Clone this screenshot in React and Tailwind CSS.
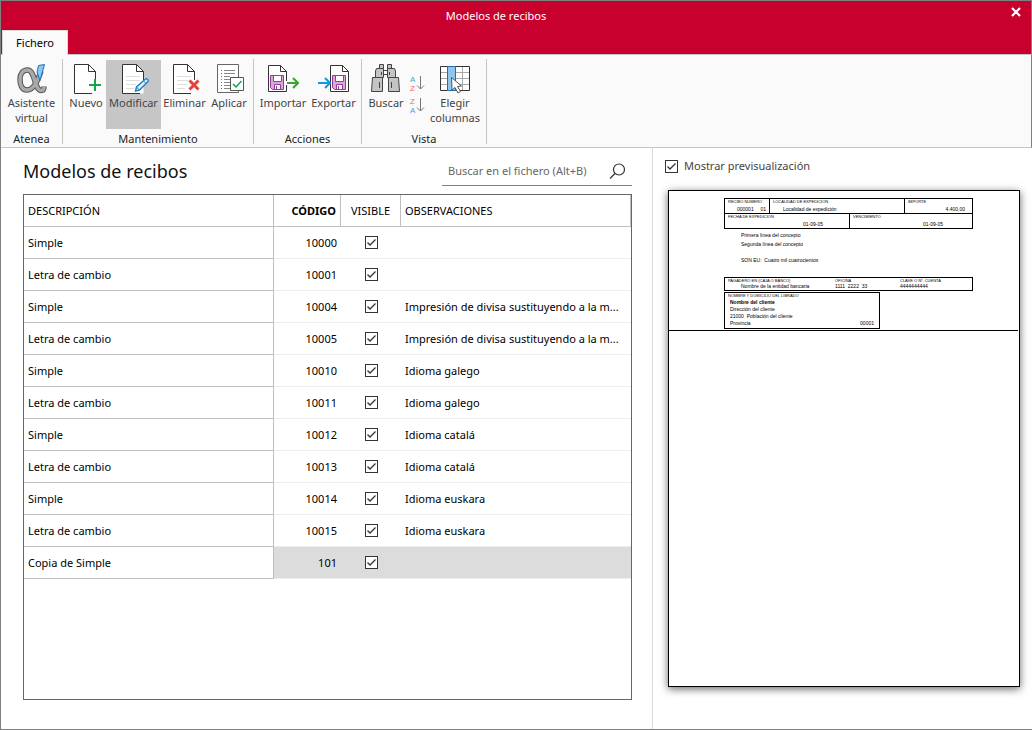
import React, { useState } from "react";

const ROWS = [
  { description: "Simple", code: 10000, notes: "" },
  { description: "Letra de cambio", code: 10001, notes: "" },
  { description: "Simple", code: 10004, notes: "Impresión de divisa sustituyendo a la m..." },
  { description: "Letra de cambio", code: 10005, notes: "Impresión de divisa sustituyendo a la m..." },
  { description: "Simple", code: 10010, notes: "Idioma galego" },
  { description: "Letra de cambio", code: 10011, notes: "Idioma galego" },
  { description: "Simple", code: 10012, notes: "Idioma catalá" },
  { description: "Letra de cambio", code: 10013, notes: "Idioma catalá" },
  { description: "Simple", code: 10014, notes: "Idioma euskara" },
  { description: "Letra de cambio", code: 10015, notes: "Idioma euskara" },
  { description: "Copia de Simple", code: 101, notes: "" },
];

const Icon = ({ children }) => (
  <svg width="32" height="32" viewBox="0 0 32 32" fill="none" aria-hidden="true">
    {children}
  </svg>
);

const AlphaIcon = () => (
  <Icon>
    <path
      d="M25 8C22 17 18 27 11 27C6 27 4 22 4 16.500C4 10.500 7 7 11.500 7C19.500 7 18 27 25 27.500C27 27.500 28 26 28 23.500"
      stroke="#555"
      strokeWidth="5.500"
    />
    <path
      d="M24.500 9C22 17 18 27 11 27C6 27 4 22 4 16.500C4 10.500 7 7 11.500 7C19.500 7 18 27 25 27.500C27 27.500 28 26 28 24"
      stroke="#a9a9a9"
      strokeWidth="3.500"
    />
    <path d="M22.500 2.500L28.500 1.500L24 17.500L21 9Z" fill="#8cc8f4" stroke="#1e6fb8" />
  </Icon>
);

const Page = () => (
  <>
    <path d="M4.500 1.500H18.500L25.500 8.500V30.500H4.500Z" fill="#fff" />
    <path d="M25.500 17V8.500L18.500 1.500H4.500V30.500H22" stroke="#333" />
    <path d="M18.500 1.500V8.500H25.500" stroke="#333" />
  </>
);

const PageLines = () => (
  <path d="M8 13.500H22M8 17.500H22M8 21.500H18M8 25.500H16" stroke="#ddd" />
);

const NewIcon = () => (
  <Icon>
    <Page />
    <path d="M19 22H31M25 16V28" stroke="#fafafa" strokeWidth="5" />
    <path d="M19 22H31M25 16V28" stroke="#16a34a" strokeWidth="2" />
  </Icon>
);

const EditIcon = () => (
  <Icon>
    <Page />
    <PageLines />
    <path
      d="M17.500 28L18.500 24L27.500 16C28.500 15 31 17 30 18.500L21.500 27Z"
      fill="#e3f1fb"
      stroke="#2484c6"
      strokeWidth="1.500"
    />
    <path d="M25.500 18L28 20.500M18.500 24L21.500 27" stroke="#2484c6" />
  </Icon>
);

const DeleteIcon = () => (
  <Icon>
    <Page />
    <PageLines />
    <path d="M20 17L30 27M30 17L20 27" stroke="#fafafa" strokeWidth="5" />
    <path d="M20.500 17.500L29.500 26.500M29.500 17.500L20.500 26.500" stroke="#e8403c" strokeWidth="3" />
  </Icon>
);

const ApplyIcon = () => (
  <Icon>
    <path d="M4.500 1.500H25.500V29.500H4.500Z" fill="#fff" stroke="#666" />
    <path
      d="M11 7.500H22M11 10.500H22M11 13.500H17M11 16.500H17M11 19.500H17M11 22.500H17M11 25.500H20"
      stroke="#888"
    />
    <path d="M8 7.500H9M8 13.500H9M8 16.500H9M8 22.500H9" stroke="#16a34a" />
    <path d="M8 10.500H9M8 19.500H9M8 25.500H9" stroke="#d03030" />
    <path d="M17.500 14.500H30.500V27.500H17.500Z" fill="#fff" stroke="#555" />
    <path d="M20 21L23 24L28.500 18" stroke="#16a34a" strokeWidth="1.500" />
  </Icon>
);

const Floppy = () => (
  <>
    <path d="M3.500 12.500H16.500V26.500H5.500L3.500 24.500Z" fill="#dba6dd" stroke="#943c97" />
    <path d="M6.500 12.500H14.500V18.500H6.500Z" fill="#fff" stroke="#943c97" />
    <path d="M7.500 21.500H13.500V26.500H7.500Z" fill="#fff" stroke="#943c97" />
    <path d="M9.500 23V26" stroke="#943c97" />
  </>
);

const SavePage = () => (
  <>
    <path d="M1.500 2.500H13.500L19.500 8.500V28.500H1.500Z" fill="#fff" stroke="#333" />
    <path d="M13.500 2.500V8.500H19.500" stroke="#333" />
    <Floppy />
  </>
);

const ImportIcon = () => (
  <Icon>
    <SavePage />
    <path d="M19 20H30M25 15L30 20L25 25" stroke="#fafafa" strokeWidth="4" />
    <path d="M20 20H31M26 15L31 20L26 25" stroke="#3aa52c" strokeWidth="2" />
  </Icon>
);

const ExportIcon = () => (
  <Icon>
    <g transform="translate(11 0)">
      <SavePage />
    </g>
    <path d="M0 20H12M7 15L12 20L7 25" stroke="#0d99dc" strokeWidth="2" />
  </Icon>
);

const BinocularsIcon = () => (
  <Icon>
    <g fill="#c6c4c2" stroke="#444">
      <path d="M9.500 1.500H13.500V5.500H9.500ZM17.500 1.500H21.500V5.500H17.500Z" />
      <path d="M13.500 7.500H17.500V11.500H13.500Z" fill="#fff" />
      <path d="M6.500 5.500H13.500V14.500H5.500V8ZM17.500 5.500H24.500L25.500 8V14.500H17.500Z" />
      <path d="M2.500 14.500H12.500V28.500H1.500ZM18.500 14.500H28.500L29.500 28.500H18.500Z" />
      <path d="M11.500 9V12M19.500 9V12M9.500 19V25M21.500 19V25" />
    </g>
  </Icon>
);

const ColumnsIcon = () => (
  <Icon>
    <path d="M1.500 3.500H30.500V27.500H1.500Z" fill="#fff" />
    <path d="M1 9.500H31M1 15.500H31M1 21.500H31M16.500 3V28M23.500 3V28" stroke="#aaa" />
    <path d="M1.500 3.500H30.500V27.500H1.500Z" stroke="#333" />
    <path d="M8.500 3.500H16.500V27.500H8.500Z" fill="#8fc6f0" stroke="#1c6fb5" />
    <path
      d="M12.500 14.500L13 27L16 24.500L19 30L21.500 28.500L18.500 23.500L22.500 23Z"
      fill="#fff"
      stroke="#555"
    />
  </Icon>
);

const SortIcon = ({ top, bottom, topColor, bottomColor }) => (
  <svg width="16" height="19" viewBox="0 0 16 19" fill="none" aria-hidden="true">
    <g fontFamily="Liberation Sans, Arial, sans-serif" fontSize="8">
      <text x="1" y="8" fill={topColor}>{top}</text>
      <text x="1" y="17" fill={bottomColor}>{bottom}</text>
    </g>
    <path d="M11.500 2V15M8 11.500L11.500 15L15 11.500" stroke="#777" />
  </svg>
);

const RibbonGroup = ({ label, className, children }) => (
  <div className={`flex flex-col border-r border-[#c6c6c6] ${className}`}>
    <div className="flex grow items-start pt-px">{children}</div>
    <div className="text-center leading-[10px] text-[#222]">{label}</div>
  </div>
);

const RibbonButton = ({ icon, label, className }) => (
  <button
    type="button"
    className={`flex h-[69px] flex-col items-center pt-[3px] leading-[15px] text-[#444] ${className}`}
  >
    {icon}
    <span className="whitespace-pre-line text-center">{label}</span>
  </button>
);

const Ribbon = () => (
  <div className="flex h-[93px] border-b border-r border-b-[#c6c6c6] border-r-[#808080] bg-[#fafafa] pt-1 pb-[3px]">
    <RibbonGroup label="Atenea" className="w-[62px]">
      <RibbonButton icon={<AlphaIcon />} label={"Asistente\nvirtual"} className="w-full" />
    </RibbonGroup>
    <RibbonGroup label="Mantenimiento" className="px-[3px]">
      <RibbonButton icon={<NewIcon />} label="Nuevo" className="w-10" />
      <RibbonButton icon={<EditIcon />} label="Modificar" className="w-[55px] bg-[#c6c6c6]" />
      <RibbonButton icon={<DeleteIcon />} label="Eliminar" className="w-[47px]" />
      <RibbonButton icon={<ApplyIcon />} label="Aplicar" className="w-[42px]" />
    </RibbonGroup>
    <RibbonGroup label="Acciones" className="px-[3px]">
      <RibbonButton icon={<ImportIcon />} label="Importar" className="w-[52px]" />
      <RibbonButton icon={<ExportIcon />} label="Exportar" className="w-[49px]" />
    </RibbonGroup>
    <RibbonGroup label="Vista" className="px-[3px]">
      <RibbonButton icon={<BinocularsIcon />} label="Buscar" className="w-[42px]" />
      <div className="flex w-5 flex-col items-center gap-[3px] pt-[14px]">
        <button type="button" aria-label="Orden ascendente">
          <SortIcon top="A" bottom="Z" topColor="#4a9edb" bottomColor="#f06a6a" />
        </button>
        <button type="button" aria-label="Orden descendente">
          <SortIcon top="Z" bottom="A" topColor="#f06a6a" bottomColor="#4a9edb" />
        </button>
      </div>
      <RibbonButton icon={<ColumnsIcon />} label={"Elegir\ncolumnas"} className="w-[56px]" />
    </RibbonGroup>
  </div>
);

const Checkbox = ({ id, label, checked, onChange }) => (
  <span className="grid size-[13px] bg-white">
    <input
      id={id}
      type="checkbox"
      aria-label={label}
      checked={checked}
      onChange={onChange}
      className="col-start-1 row-start-1 size-[13px] appearance-none border border-[#333]"
    />
    {checked && (
      <svg
        viewBox="0 0 13 13"
        fill="none"
        className="pointer-events-none col-start-1 row-start-1 size-[13px]"
        aria-hidden="true"
      >
        <path d="M2.500 6.500L5 9L10.500 3.500" stroke="#333" strokeWidth="1.300" />
      </svg>
    )}
  </span>
);

const ModelsTable = () => {
  const [hidden, setHidden] = useState([]);
  const [selected, setSelected] = useState(101);

  const toggleVisible = (code) => {
    setHidden(
      hidden.includes(code) ? hidden.filter((c) => c !== code) : [...hidden, code]
    );
  };

  return (
    <table className="w-full table-fixed border-separate border-spacing-0 text-black">
      <colgroup>
        <col className="w-[250px]" />
        <col className="w-[67px]" />
        <col className="w-[60px]" />
        <col />
      </colgroup>
      <thead>
        <tr className="h-8">
          <th className="border-r border-b border-[#c0c0c0] pt-[2px] pl-1 text-left font-normal">
            DESCRIPCIÓN
          </th>
          <th className="border-r border-b border-[#c0c0c0] pt-[2px] pr-1 text-right font-bold">
            CÓDIGO
          </th>
          <th className="border-r border-b border-[#c0c0c0] pt-[2px] text-center font-normal">
            VISIBLE
          </th>
          <th className="border-r border-b border-[#c0c0c0] pt-[2px] pl-1 text-left font-normal">
            OBSERVACIONES
          </th>
        </tr>
      </thead>
      <tbody>
        {ROWS.map((row) => (
          <tr
            key={row.code}
            onClick={() => setSelected(row.code)}
            className={row.code === selected ? "h-8 bg-[#dcdcdc]" : "h-8"}
          >
            <td className="border-r border-b border-[#c0c0c0] bg-white pt-[2px] pl-1">
              {row.description}
            </td>
            <td className="border-b border-[#ededed] pt-[2px] pr-1 text-right">{row.code}</td>
            <td className="border-b border-[#ededed]">
              <div className="flex justify-center">
                <Checkbox
                  label={`Visible ${row.code}`}
                  checked={!hidden.includes(row.code)}
                  onChange={() => toggleVisible(row.code)}
                />
              </div>
            </td>
            <td className="truncate border-b border-[#ededed] pt-[2px] pl-1">{row.notes}</td>
          </tr>
        ))}
      </tbody>
    </table>
  );
};

const Caption = ({ children }) => <div className="text-[4px] leading-[5px]">{children}</div>;

const Receipt = () => (
  <div className="mr-px border-b border-black pt-[7px] pb-px pl-[55px] font-['Liberation_Sans',Arial,sans-serif] text-[5px] leading-[7px] whitespace-pre text-black">
    <div className="w-[249px] border border-black">
      <div className="flex h-[15px] border-b border-black">
        <div className="w-[45px] border-r border-black pl-[3px]">
          <Caption>RECIBO NUMERO</Caption>
          <div className="flex justify-between pt-[2px] pr-[3px] pl-[9px]">
            <span>000001</span>
            <span>01</span>
          </div>
        </div>
        <div className="w-[135px] border-r border-black pl-[3px]">
          <Caption>LOCALIDAD DE EXPEDICION</Caption>
          <div className="pt-[2px] pl-[10px]">Localidad de expedición</div>
        </div>
        <div className="grow pl-[3px]">
          <Caption>IMPORTE</Caption>
          <div className="pt-[2px] pr-[7px] text-right">4.400,00</div>
        </div>
      </div>
      <div className="flex h-[14px]">
        <div className="w-[125px] border-r border-black pl-[3px]">
          <Caption>FECHA DE EXPEDICION</Caption>
          <div className="pt-[2px] pl-[75px]">01-09-05</div>
        </div>
        <div className="grow pl-[3px]">
          <Caption>VENCIMIENTO</Caption>
          <div className="pt-[2px] pl-[70px]">01-09-05</div>
        </div>
      </div>
    </div>
    <div className="flex flex-col gap-[2px] pt-[3px] pb-[13px] pl-[17px]">
      <p>Primera línea del concepto</p>
      <p>Segunda línea del concepto</p>
      <p className="pt-[7px]">SON EU:  Cuatro mil cuatrocientos</p>
    </div>
    <div className="flex h-[14px] w-[249px] border border-black pl-[3px]">
      <div className="w-[107px]">
        <Caption>PAGADERO EN (CAJA O BANCO)</Caption>
        <div className="pl-[13px]">Nombre de la entidad bancaria</div>
      </div>
      <div className="w-[65px]">
        <Caption>OFICINA</Caption>
        <div>1111  2222  33</div>
      </div>
      <div>
        <Caption>CLAVE O Nº. CUENTA</Caption>
        <div>4444444444</div>
      </div>
    </div>
    <div className="mt-px h-[37px] w-[156px] border border-black pr-[5px] pl-[3px]">
      <Caption>NOMBRE Y DOMICILIO DEL LIBRADO</Caption>
      <div className="pt-px pl-[2px]">
        <p className="font-bold">Nombre del cliente</p>
        <p>Dirección del cliente</p>
        <p>21000  Población del cliente</p>
        <div className="flex justify-between">
          <span>Provincia</span>
          <span>00001</span>
        </div>
      </div>
    </div>
  </div>
);

const App = () => {
  const [search, setSearch] = useState("");
  const [preview, setPreview] = useState(true);

  return (
    <div className="flex min-h-screen flex-col border-t border-b border-l border-[#808080] bg-white font-['Noto_Sans','Open_Sans',sans-serif] text-[11px]">
      <header className="border-r border-b border-r-[#808080] border-b-[#c6c6c6] bg-[#c8002d] text-white">
        <div className="flex h-[29px] items-start">
          <div className="grow pt-[7px] text-center leading-4">Modelos de recibos</div>
          <button
            type="button"
            aria-label="Cerrar"
            className="flex w-10 justify-end pt-[6px] pr-[10px]"
          >
            <svg width="10" height="10" viewBox="0 0 10 10" fill="none" aria-hidden="true">
              <path d="M1 1L9 9M9 1L1 9" stroke="#fff" strokeWidth="2.200" />
            </svg>
          </button>
        </div>
        <nav className="flex pl-px">
          <button
            type="button"
            className="-mb-px h-[25px] w-[66px] border border-b-0 border-[#d9d9d9] bg-[#fafafa] text-black"
          >
            Fichero
          </button>
        </nav>
      </header>

      <Ribbon />

      <div className="flex grow">
        <main className="flex grow flex-col border-r border-[#dcdcdc] pt-[10px] pr-5 pb-[29px] pl-[22px]">
          <div className="flex justify-between">
            <h1 className="text-[18px] leading-[26px] text-[#111]">Modelos de recibos</h1>
            <div className="flex h-7 w-[190px] items-center border-b border-[#808080] pr-[6px] pl-[6px]">
              <input
                type="text"
                aria-label="Buscar en el fichero"
                placeholder="Buscar en el fichero (Alt+B)"
                value={search}
                onChange={(e) => setSearch(e.target.value)}
                className="min-w-0 grow outline-none placeholder:text-[#666]"
              />
              <button type="button" aria-label="Buscar">
                <svg width="17" height="17" viewBox="0 0 17 17" fill="none" aria-hidden="true">
                  <circle cx="10" cy="6.500" r="5.500" stroke="#333" strokeWidth="1.200" />
                  <path d="M6 10.500L1 15.500" stroke="#333" strokeWidth="1.200" />
                </svg>
              </button>
            </div>
          </div>
          <div className="mt-2 grow border border-[#666]">
            <ModelsTable />
          </div>
        </main>

        <aside className="flex w-[379px] shrink-0 flex-col pt-[10px] pr-3 pb-[42px] pl-[15px]">
          <div className="-ml-[3px] flex h-4 items-center gap-[6px] text-[#444]">
            <Checkbox
              id="preview"
              checked={preview}
              onChange={() => setPreview(!preview)}
            />
            <label htmlFor="preview">Mostrar previsualización</label>
          </div>
          {preview && (
            <div className="mt-4 grow border border-black bg-white shadow-[0_2px_8px_rgba(0,0,0,0.6)]">
              <Receipt />
            </div>
          )}
        </aside>
      </div>
    </div>
  );
};

export default App;
